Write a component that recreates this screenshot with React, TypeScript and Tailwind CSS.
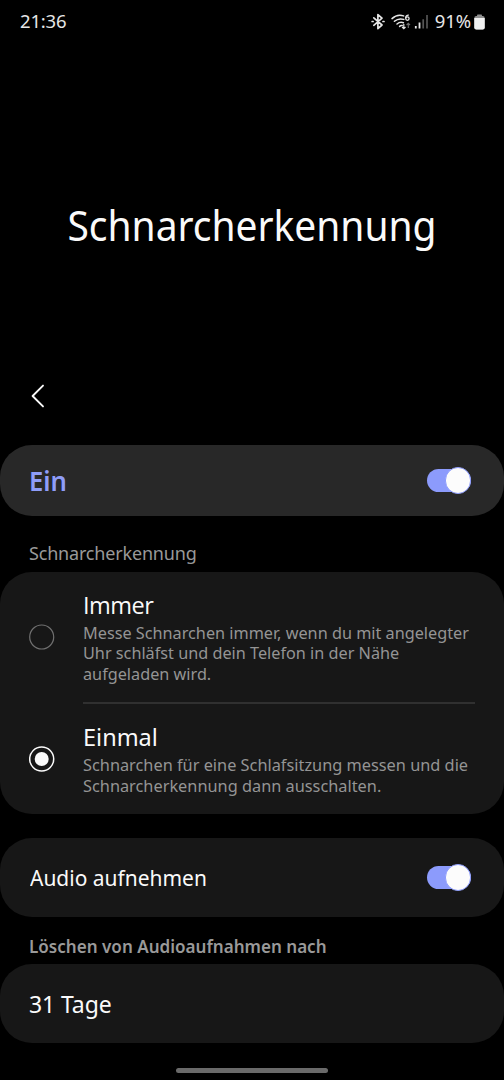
function StatusIcons() {
  return (
    <svg width="62" height="20" viewBox="370.8 12 62 20" fill="none" aria-hidden="true">
      <g stroke="#e6e6e6" strokeWidth="1.7" strokeLinecap="round" strokeLinejoin="round">
        <path d="M373.6 17.8 381.8 25 377.7 28.6V14.6L381.8 18.2 373.6 25.3" />
        <path d="M371.9 21.5h1M382.8 21.5h1" />
      </g>
      <g stroke="#e6e6e6" strokeWidth="1.5" strokeLinecap="round">
        <path d="M391.8 18.6C395 15.6 399.5 14.6 403.4 15.9" />
        <path d="M394.2 21.3C396.8 19 400.2 18.4 403.6 19.4" />
        <path d="M396.8 24C398.8 22.3 401 22 403.2 22.7" />
        <path d="M399.4 26.4C400.4 25.5 401.2 25.4 402 25.6" />
      </g>
      <path d="M403.6 24v4.4M401.9 27l1.7 1.7 1.7-1.7" stroke="#e6e6e6" strokeWidth="1.2" />
      <path d="M408.1 28v-4.6M406.4 25l1.7-1.7 1.7 1.7" stroke="#707070" strokeWidth="1.1" />
      <path d="M408.6 15.2C406.5 15 405.3 16.6 405.4 18.3" stroke="#e6e6e6" strokeWidth="1.3" />
      <circle cx="407.2" cy="18.6" r="1.7" stroke="#e6e6e6" strokeWidth="1.3" />
      <path d="M415.6 26v2.5M419.3 22.6v5.9" stroke="#e6e6e6" strokeWidth="1.8" />
      <path d="M423 19.2v9.3M426.8 15v13.5" stroke="#555" strokeWidth="1.7" />
    </svg>
  );
}

function Battery() {
  return (
    <svg width="11" height="16" viewBox="0 0 11 16" aria-hidden="true">
      <rect x="3" y="0.6" width="5" height="3" rx="0.8" fill="#8f8f8f" />
      <rect x="0.3" y="2" width="10.4" height="13.4" rx="2" fill="#8f8f8f" />
      <path d="M.3 4h10.4v9.4a2 2 0 0 1-2 2H2.3a2 2 0 0 1-2-2z" fill="#f2f2f2" />
    </svg>
  );
}

function Toggle() {
  return (
    <button role="switch" aria-checked="true" className="flex h-[27px] w-[44px] items-center">
      <span className="flex h-[23.5px] w-[44px] items-center justify-end rounded-full bg-[#8c9bfc]">
        <span className="-mr-[0.6px] size-[26.6px] shrink-0 rounded-full border-[1.3px] border-[#8c9bfc] bg-[#fcfcfc]" />
      </span>
    </button>
  );
}

function Radio({ checked = false }: { checked?: boolean }) {
  return (
    <svg width="26" height="26" viewBox="0 0 26 26" fill="none" role="radio" aria-checked={checked} className="shrink-0">
      <circle cx="12.7" cy="13" r="12" stroke={checked ? "#fafafa" : "#707070"} strokeWidth={checked ? 1.5 : 1.2} />
      {checked && <circle cx="12.7" cy="13" r="7" fill="#fafafa" />}
    </svg>
  );
}

export default function App() {
  return (
    <main className="flex h-[1080px] w-[504px] flex-col overflow-hidden bg-black font-['Noto_Sans',sans-serif] text-[#fafafa]">
      <header className="flex h-[43px] items-center justify-between pr-[19px] pl-[20px] text-[18.5px] leading-[20px] text-[#e6e6e6]">
        <span className="-mt-px tracking-[-0.2px]">21:36</span>
        <span className="flex items-center">
          <StatusIcons />
          <span className="-mt-px ml-[2px] tracking-[-0.1px]">91%</span>
          <span className="ml-[3px]"><Battery /></span>
        </span>
      </header>

      <h1 className="mt-[152px] h-[60px] scale-x-[0.938] text-center text-[41.5px] leading-[60px] font-[370]">
        Schnarcherkennung
      </h1>

      <button className="mt-[128px] ml-[29px] flex h-[26px] w-[18px] items-center" aria-label="Zurück">
        <svg width="18" height="26" viewBox="0 0 18 26" fill="none">
          <path d="M14 2.6 3.6 13 14 23.4" stroke="#fafafa" strokeWidth="1.9" strokeLinecap="round" strokeLinejoin="round" />
        </svg>
      </button>

      <section className="mt-[36px] flex h-[71px] items-center justify-between rounded-[32px] bg-[#282828] pr-[33.3px] pl-[29px]">
        <span className="origin-left scale-x-[0.95] text-[27px] leading-[30px] font-semibold text-[#8f9df8]">Ein</span>
        <Toggle />
      </section>

      <h2 className="mt-[25px] h-[31px] pl-[29px] text-[18px] leading-[25px] tracking-[-0.18px] text-[#999]">Schnarcherkennung</h2>

      <section className="flex h-[242px] flex-col rounded-[32px] bg-[#171717] pl-[29px]" role="radiogroup">
        <div className="flex h-[130px] items-center">
          <Radio />
          <div className="ml-[28px] pt-px">
            <h3 className="font-['Open_Sans',sans-serif] text-[23.5px] leading-[29px] tracking-[-0.5px]">Immer</h3>
            <p className="mt-[3px] origin-left scale-x-[0.955] text-[17px] leading-[20.3px] whitespace-nowrap text-[#949494]">
              Messe Schnarchen immer, wenn du mit angelegter<br />
              Uhr schläfst und dein Telefon in der Nähe<br />
              aufgeladen wird.
            </p>
          </div>
        </div>
        <div className="mr-[29px] ml-[54px] h-[2px] bg-[#303030]" />
        <div className="flex h-[110px] items-center">
          <Radio checked />
          <div className="ml-[28px] pt-px">
            <h3 className="text-[23.5px] leading-[29px]">Einmal</h3>
            <p className="mt-[3px] origin-left scale-x-[0.96] text-[17px] leading-[20.3px] whitespace-nowrap text-[#949494]">
              Schnarchen für eine Schlafsitzung messen und die<br />
              Schnarcherkennung dann ausschalten.
            </p>
          </div>
        </div>
      </section>

      <section className="mt-[24px] flex h-[79px] items-center justify-between rounded-[32px] bg-[#171717] pr-[33.3px] pl-[29.5px]">
        <span className="origin-left scale-x-[0.932] text-[22.5px] leading-[30px]">Audio aufnehmen</span>
        <Toggle />
      </section>

      <h2 className="mt-[17px] flex h-[30px] pl-[28.7px] text-[18px] leading-[25px] font-semibold text-[#999]">
        <span className="origin-left scale-x-[0.948]">Löschen von Audioaufnahmen nach</span>
      </h2>

      <section className="flex h-[79px] items-center rounded-[32px] bg-[#171717] pl-[29px]">
        <span className="text-[23px] leading-[30px] tracking-[-0.1px]">31 Tage</span>
      </section>

      <div className="mt-[25px] ml-[176px] h-[5px] w-[152px] rounded-full bg-[#6a6a6a]" />
    </main>
  );
}
